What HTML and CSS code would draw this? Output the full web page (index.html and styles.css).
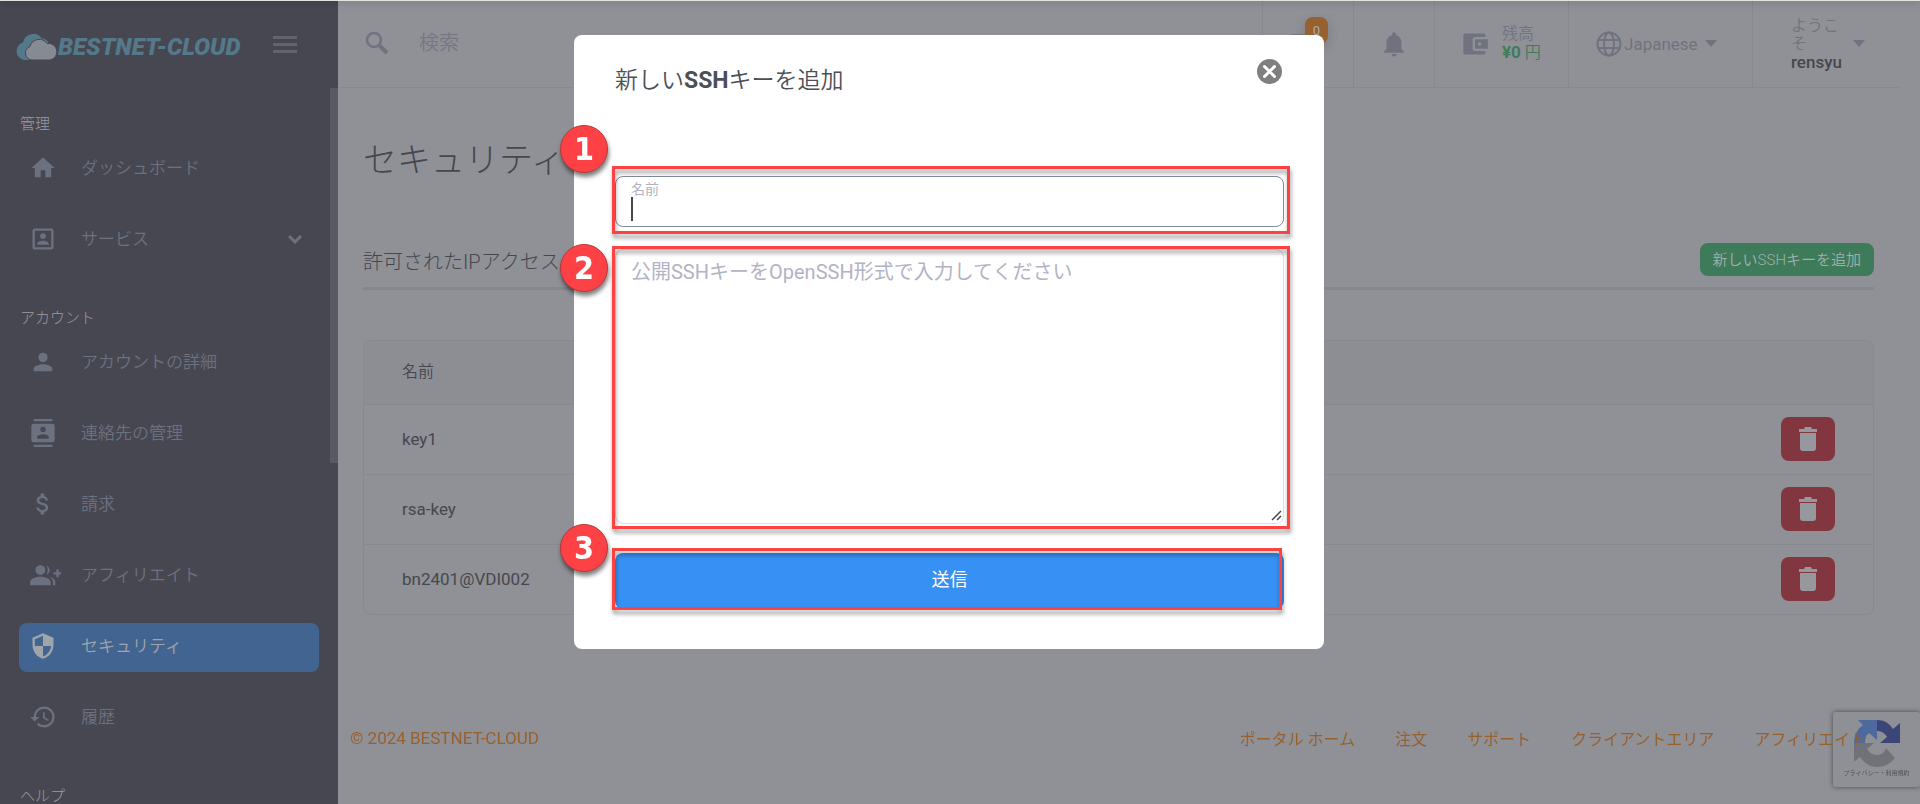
FILE: index.html
```
<!DOCTYPE html>
<html lang="ja">
<head>
  <meta charset="UTF-8" />
  <meta name="viewport" content="width=device-width, initial-scale=1.0"/>
  <title>セキュリティ - BESTNET-CLOUD</title>
  <link rel="stylesheet" href="styles.css">
</head>
<body>
  <div class="page">
    <aside class="sidebar">
      <div class="brand">
        <a href="#" class="logo">
          <svg width="42" height="26" viewBox="0 0 42 26">
            <path fill="#53798a" d="M9 26a9 9 0 0 1-1-17.500A10.500 10.500 0 0 1 27 4.500c4 0 7 3 7 7.500v14z"/>
            <path fill="#868a93" stroke="#474751" d="M17 26a7 7 0 0 1-2-13.500 9.500 9.500 0 0 1 17-3 8.200 8.200 0 0 1 3 16.500z"/>
          </svg>
          <span>BESTNET-CLOUD</span>
        </a>
        <button class="menu-toggle" aria-label="メニュー"><i></i><i></i><i></i></button>
      </div>
      <nav>
        <h6>管理</h6>
        <a href="#" class="nav-item">
          <svg class="icon" viewBox="0 0 24 24"><path d="M10 20v-6h4v6h5v-8h3L12 3 2 12h3v8z"/></svg>
          ダッシュボード
        </a>
        <a href="#" class="nav-item">
          <svg class="icon" viewBox="0 0 24 24"><path d="M19 3H5a2 2 0 0 0-2 2v14c0 1.100.900 2 2 2h14a2 2 0 0 0 2-2V5a2 2 0 0 0-2-2zm0 16H5V5h14v14zm-7-7a2.500 2.500 0 1 0 0-5 2.500 2.500 0 0 0 0 5zm5 4.500c0-2-3.300-3-5-3s-5 1-5 3v.500h10z"/></svg>
          サービス
          <svg class="chevron" width="14" height="9" viewBox="0 0 14 9"><path d="M1 1l6 6 6-6" fill="none" stroke="currentColor" stroke-width="3"/></svg>
        </a>
        <h6>アカウント</h6>
        <a href="#" class="nav-item">
          <svg class="icon" viewBox="0 0 24 24"><path d="M12 12a4 4 0 1 0 0-8 4 4 0 0 0 0 8zm0 2c-2.700 0-8 1.300-8 4v2h16v-2c0-2.700-5.300-4-8-4z"/></svg>
          アカウントの詳細
        </a>
        <a href="#" class="nav-item">
          <svg class="icon" viewBox="0 0 24 24"><path d="M20 0H4v2h16V0zM4 24h16v-2H4v2zM20 4H4a2 2 0 0 0-2 2v12c0 1.100.900 2 2 2h16a2 2 0 0 0 2-2V6a2 2 0 0 0-2-2zm-8 2.700a2.300 2.300 0 1 1 0 4.600 2.300 2.300 0 0 1 0-4.600zM17 17H7v-1.500c0-1.700 3.300-2.500 5-2.500s5 .800 5 2.500V17z"/></svg>
          連絡先の管理
        </a>
        <a href="#" class="nav-item">
          <svg class="icon" viewBox="0 0 24 24"><path d="M11.800 10.900c-2.300-.600-3-1.200-3-2.100 0-1.100 1-1.900 2.700-1.900 1.800 0 2.400.900 2.500 2.100h2.200c-.100-1.700-1.100-3.300-3.200-3.800V3h-3v2.200c-1.900.400-3.500 1.600-3.500 3.600 0 2.300 1.900 3.500 4.700 4.100 2.500.600 3 1.500 3 2.400 0 .700-.500 1.800-2.700 1.800-2.100 0-2.900-.900-3-2.100H6.300c.100 2.200 1.800 3.400 3.700 3.800V21h3v-2.200c2-.400 3.500-1.500 3.500-3.600 0-2.800-2.400-3.800-4.700-4.300z"/></svg>
          請求
        </a>
        <a href="#" class="nav-item">
          <svg class="icon wide" viewBox="0 0 28 24"><path d="M10 12a4.300 4.300 0 1 0 0-8.600 4.300 4.300 0 0 0 0 8.600zm0 1.500c-3 0-9 1.500-9 4.500v3h18v-3c0-3-6-4.500-9-4.500zM15 11.800a4.300 4.300 0 0 0 0-8.200c1.900 2.200 1.900 6 0 8.200zM18 14c2 1.200 3 2.500 3 4.500V21h2v-3c0-2.200-2.200-3.500-5-4zM26 9.500V7h-2v2.500h-2.500v2H24V14h2v-2.500h2v-2z"/></svg>
          アフィリエイト
        </a>
        <a href="#" class="nav-item active">
          <svg class="icon tall" viewBox="0 0 24 24"><path d="M12 1L3 5v6c0 5.600 3.800 10.700 9 12 5.200-1.300 9-6.400 9-12V5l-9-4zm0 11h7c-.500 4.100-3.300 7.800-7 8.900V12H5V6.300l7-3.100V12z"/></svg>
          セキュリティ
        </a>
        <a href="#" class="nav-item">
          <svg class="icon" viewBox="0 0 24 24"><path d="M13 3a9 9 0 0 0-9 9H1l3.900 3.900L9 12H6a7 7 0 1 1 2.100 4.900l-1.500 1.500A9 9 0 1 0 13 3zm-1 5v5l4.300 2.500.700-1.200-3.500-2.100V8z"/></svg>
          履歴
        </a>
        <h6>ヘルプ</h6>
      </nav>
      <div class="scroll-thumb"></div>
    </aside>

    <div class="main">
      <header class="topbar">
        <div class="search">
          <svg width="24" height="24" viewBox="0 0 24 24"><circle cx="9" cy="9" r="7" fill="none" stroke="currentColor" stroke-width="2.500"/><path d="M14 14l8 8" stroke="currentColor" stroke-width="4"/></svg>
          <input type="text" placeholder="検索" aria-label="検索">
        </div>
        <a href="#" class="cell cart" aria-label="カート">
          <svg width="26" height="26" viewBox="0 0 24 24" fill="currentColor"><path d="M2 3h18l-3 10H7v2h12v2H5V5H2zM7 18a2 2 0 1 0 0 4 2 2 0 0 0 0-4zm10 0a2 2 0 1 0 0 4 2 2 0 0 0 0-4z"/></svg>
          <span class="count">0</span>
        </a>
        <a href="#" class="cell bell" aria-label="通知">
          <svg width="30" height="30" viewBox="0 0 24 24" fill="currentColor"><path d="M12 22a2 2 0 0 0 2-2h-4c0 1.100.900 2 2 2zm6-6v-5c0-3.100-1.600-5.600-4.500-6.300V4a1.500 1.500 0 0 0-3 0v.700C7.600 5.400 6 7.900 6 11v5l-2 2v1h16v-1z"/></svg>
        </a>
        <a href="#" class="cell wallet">
          <svg width="28" height="28" viewBox="0 0 24 24" fill="currentColor"><path d="M19 3H4a2 2 0 0 0-2 2v14c0 1.100.900 2 2 2h15a2 2 0 0 0 2-2v-1h-9a2 2 0 0 1-2-2V8c0-1.100.900-2 2-2h9V5a2 2 0 0 0-2-2zm-7 5v8h11V8H12zm4 5.500a1.500 1.500 0 1 1 0-3 1.500 1.500 0 0 1 0 3z"/></svg>
          <div>残高<div class="balance"><b>¥0</b> 円</div></div>
        </a>
        <label class="cell lang">
          <svg width="26" height="26" viewBox="0 0 26 26" fill="none" stroke="currentColor" stroke-width="2"><circle cx="13" cy="13" r="11.500"/><ellipse cx="13" cy="13" rx="5" ry="11.500"/><path d="M2.500 9h21M2.500 17h21"/></svg>
          <select aria-label="言語"><option>Japanese</option></select>
          <svg class="caret" width="12" height="7" viewBox="0 0 12 7"><path d="M0 0h12L6 7z" fill="currentColor"/></svg>
        </label>
        <button class="cell user">
          <span>ようこそ<b>rensyu</b></span>
          <svg class="caret" width="12" height="7" viewBox="0 0 12 7"><path d="M0 0h12L6 7z" fill="currentColor"/></svg>
        </button>
      </header>

      <div class="content">
        <h1>セキュリティ</h1>
        <div class="tabs">
          <h2>許可されたIPアクセス</h2>
          <button class="btn-add">新しいSSHキーを追加</button>
        </div>
        <div class="table-wrap">
          <table>
            <thead>
              <tr><th>名前</th><th></th></tr>
            </thead>
            <tbody>
              <tr>
                <td>key1</td>
                <td><button class="btn-delete" aria-label="削除"><svg width="18" height="24" viewBox="0 0 18 24"><path d="M0 2h5l1-2h6l1 2h5v3H0zM1 6h16v15a3 3 0 0 1-3 3H4a3 3 0 0 1-3-3z"/></svg></button></td>
              </tr>
              <tr>
                <td>rsa-key</td>
                <td><button class="btn-delete" aria-label="削除"><svg width="18" height="24" viewBox="0 0 18 24"><path d="M0 2h5l1-2h6l1 2h5v3H0zM1 6h16v15a3 3 0 0 1-3 3H4a3 3 0 0 1-3-3z"/></svg></button></td>
              </tr>
              <tr>
                <td>bn2401@VDI002</td>
                <td><button class="btn-delete" aria-label="削除"><svg width="18" height="24" viewBox="0 0 18 24"><path d="M0 2h5l1-2h6l1 2h5v3H0zM1 6h16v15a3 3 0 0 1-3 3H4a3 3 0 0 1-3-3z"/></svg></button></td>
              </tr>
            </tbody>
          </table>
        </div>
      </div>

      <footer class="footer">
        <span>© 2024 BESTNET-CLOUD</span>
        <nav class="footer-links">
          <a href="#">ポータル ホーム</a>
          <a href="#">注文</a>
          <a href="#">サポート</a>
          <a href="#">クライアントエリア</a>
          <a href="#">アフィリエイト</a>
        </nav>
      </footer>
    </div>
  </div>

  <div class="recaptcha">
    <svg width="46" height="47" viewBox="0 0 46 47">
      <path fill="#3c4577" d="M23 0c7 0 12 3 16 9l7-6v20H26l7-6c-2-4-6-6-10-6z"/>
      <path fill="#4c6a9d" d="M23 0H4l5 5C3 9 0 16 0 23h11c0-4 1-8 4-10l8 7z"/>
      <path fill="#717277" d="M0 23v19l6-5c4 6 10 10 17 10 8 0 14-4 18-9l-9-10c-2 5-5 7-9 7-5 0-8-3-10-6l7-6z"/>
    </svg>
    <small>プライバシー・利用規約</small>
  </div>

  <div class="modal-overlay">
    <div class="modal" role="dialog" aria-labelledby="modalTitle">
      <div class="modal-header">
        <h3 id="modalTitle">新しい<b>SSH</b>キーを追加</h3>
        <button class="close" aria-label="閉じる">
          <svg width="25" height="25" viewBox="0 0 25 25"><circle cx="12.500" cy="12.500" r="12.500" fill="#7f7f7f"/><path d="M7.500 7.500l10 10M17.500 7.500l-10 10" stroke="#fff" stroke-width="3" stroke-linecap="round"/></svg>
        </button>
      </div>
      <form>
        <div class="field name-field">
          <label for="keyName">名前</label>
          <input type="text" id="keyName">
          <span class="cursor"></span>
          <span class="highlight"></span>
          <span class="step">1</span>
        </div>
        <div class="field key-field">
          <textarea aria-label="公開SSHキー" placeholder="公開SSHキーをOpenSSH形式で入力してください"></textarea>
          <svg class="grip" width="11" height="11" viewBox="0 0 11 11"><path d="M1 10l9-9M6 10l4-4" stroke="#45474f" stroke-width="1.500"/></svg>
          <span class="highlight"></span>
          <span class="step">2</span>
        </div>
        <div class="field submit-field">
          <button type="button" class="btn-submit">送信</button>
          <span class="highlight"></span>
          <span class="step">3</span>
        </div>
      </form>
    </div>
  </div>
  <div class="top-line"></div>
</body>
</html>
```
FILE: styles.css
```
* {
  box-sizing: border-box;
}
body {
  margin: 0;
  background: #909196;
  color: #45474f;
  font-family: Roboto, 'Noto Sans CJK JP', sans-serif;
  font-size: 17px;
  font-weight: 400;
  line-height: 24px;
}
a {
  color: inherit;
  text-decoration: none;
}
button, input, select, textarea {
  font: inherit;
  color: inherit;
}
button {
  border: none;
  background: none;
  padding: 0;
  cursor: pointer;
}
h1, h2, h3, h6 {
  margin: 0;
  font-weight: 300;
}
.top-line {
  position: fixed;
  z-index: 3;
  top: 0;
  left: 0;
  right: 0;
  height: 1px;
  background: #dfe6df;
  box-shadow: 0 1px 6px rgba(0, 0, 0, 0.5);
}
.page {
  display: flex;
  height: 100vh;
  overflow: hidden;
}

/* sidebar */
.sidebar {
  position: relative;
  flex: 0 0 338px;
  background: #474751;
  color: #6c7180;
  overflow: hidden;
}
.brand {
  display: flex;
  align-items: center;
  justify-content: space-between;
  height: 88px;
  padding: 0 41px 0 15px;
}
.logo {
  display: flex;
  align-items: center;
  gap: 1px;
  padding-top: 6px;
  color: #53798a;
  font-size: 24px;
  font-weight: 900;
  font-style: italic;
}
.menu-toggle {
  display: flex;
  flex-direction: column;
  gap: 4px;
  width: 24px;
}
.menu-toggle i {
  height: 3px;
  background: #62636f;
}
.sidebar nav {
  padding: 28px 19px 0;
}
.sidebar h6 {
  margin: 45px 0 13px 1px;
  color: #9a9ba0;
  font-size: 15px;
  line-height: 16px;
}
.sidebar h6:first-child {
  margin-top: 0;
}
.nav-item {
  display: flex;
  align-items: center;
  height: 49px;
  margin-bottom: 22px;
  padding: 0 17px 3px 10px;
  border-radius: 8px;
  font-weight: 350;
}
.nav-item:has(+ h6) {
  margin-bottom: 0;
}
.nav-item.active {
  background: #416590;
  color: #a0a4ab;
}
.icon {
  width: 28px;
  height: 28px;
  margin-right: 24px;
  fill: currentColor;
}
.icon.wide {
  width: 32px;
  margin-right: 20px;
}
.icon.tall {
  height: 32px;
}
.chevron {
  margin-left: auto;
}
.scroll-thumb {
  position: absolute;
  top: 88px;
  right: 0;
  width: 8px;
  height: 375px;
  background: #575963;
}

/* top bar */
.main {
  flex: 1;
  min-width: 0;
  padding-right: 21px;
}
.topbar {
  display: flex;
  height: 88px;
  border-bottom: 1px solid #88898e;
  color: #70737f;
}
.search {
  flex: 1;
  display: flex;
  align-items: center;
  gap: 28px;
  padding: 0 0 2px 27px;
}
.search input {
  flex: 1;
  min-width: 0;
  border: none;
  background: none;
  font-size: 20px;
  font-weight: 350;
}
::placeholder {
  color: #757783;
  opacity: 1;
}
.cell {
  position: relative;
  display: flex;
  align-items: center;
  border-left: 1px solid #88898e;
  font-size: 17px;
}
.cart {
  width: 91px;
  padding-left: 26px;
}
.count {
  position: absolute;
  top: 17px;
  left: 42px;
  width: 23px;
  height: 27px;
  border-radius: 8px;
  background: #97602f;
  color: #b0aba8;
  font-size: 13px;
  line-height: 27px;
  text-align: center;
  box-shadow: 0 4px 12px rgba(0, 0, 0, 0.15);
}
.bell {
  width: 81px;
  justify-content: center;
}
.wallet {
  width: 134px;
  gap: 13px;
  padding-left: 26px;
  font-size: 16px;
  font-weight: 350;
  line-height: 18px;
}
.balance {
  color: #3e7b5b;
}
.balance b {
  font-size: 17px;
  font-weight: 700;
}
.lang {
  width: 184px;
  padding-left: 27px;
}
.lang select {
  width: 83px;
  padding: 0 0 0 2px;
  border: none;
  background: none;
  appearance: none;
}
.user {
  width: 147px;
  gap: 12px;
  padding-left: 38px;
  font-size: 16px;
  font-weight: 350;
  line-height: 18px;
  text-align: left;
}
.user span {
  width: 50px;
}
.user b {
  display: block;
  color: #45474f;
  font-size: 17px;
  font-weight: 500;
}

/* content */
.content {
  padding: 48px 25px 0;
}
h1 {
  font-size: 34px;
  line-height: 48px;
}
.tabs {
  display: flex;
  justify-content: space-between;
  align-items: flex-end;
  margin-top: 59px;
  padding-bottom: 11px;
  border-bottom: 3px solid #86878c;
}
h2 {
  font-size: 20px;
  line-height: 28px;
}
.btn-add {
  height: 33px;
  padding: 0 13px;
  border-radius: 8px;
  background: #3e7b5b;
  color: #a3b0ab;
  font-size: 15px;
  font-weight: 350;
}
.table-wrap {
  margin-top: 50px;
  border: 1px solid #88898e;
  border-radius: 8px;
  overflow: hidden;
}
table {
  width: 100%;
  border-collapse: collapse;
}
th, td {
  padding: 13px 38px;
  text-align: left;
}
th {
  height: 63px;
  background: #8d8e93;
  font-size: 16px;
  font-weight: 350;
}
tbody td {
  height: 70px;
  padding: 12px 38px 13px;
  border-top: 1px solid #88898e;
}
td:last-child {
  text-align: right;
}
.btn-delete {
  display: inline-flex;
  align-items: center;
  justify-content: center;
  width: 54px;
  height: 44px;
  border-radius: 8px;
  background: #813640;
  vertical-align: top;
}
.btn-delete svg {
  fill: #97989d;
}
.footer {
  position: relative;
  z-index: 1;
  display: flex;
  justify-content: space-between;
  margin-top: 111px;
  padding: 0 33px 0 12px;
  color: #97602f;
}
.footer-links {
  display: flex;
  gap: 40px;
  padding-top: 2px;
  font-size: 16px;
}
.recaptcha {
  position: fixed;
  right: 0;
  bottom: 17px;
  display: flex;
  flex-direction: column;
  align-items: center;
  width: 87px;
  height: 75px;
  padding-top: 8px;
  border-radius: 3px;
  background: #8f9095;
  box-shadow: 0 0 5px rgba(0, 0, 0, 0.5);
}
.recaptcha small {
  color: #505157;
  font-size: 6px;
  line-height: 12px;
  white-space: nowrap;
}

/* modal */
.modal-overlay {
  position: fixed;
  z-index: 2;
  inset: 0;
  padding: 35px 22px 0 0;
}
.modal {
  width: 750px;
  margin: 0 auto;
  padding: 23px 40px 40px 41px;
  border-radius: 8px;
  background: #fff;
}
.modal-header {
  display: flex;
  justify-content: space-between;
  align-items: flex-start;
  margin-bottom: 75px;
}
.modal-header h3 {
  padding-top: 3px;
  color: #4c4f55;
  font-size: 23px;
  font-weight: 350;
  line-height: 40px;
}
.modal-header b {
  font-weight: 700;
}
.close {
  display: flex;
  padding: 1px 2px 0 0;
}
.field {
  position: relative;
}
.name-field label {
  position: absolute;
  top: 4px;
  left: 16px;
  color: #b2b3c4;
  font-size: 14px;
  line-height: 18px;
}
.name-field input {
  display: block;
  width: 100%;
  height: 51px;
  padding: 20px 16px 4px;
  border: 1px solid #7d8b9b;
  border-radius: 8px;
  outline: none;
}
.cursor {
  position: absolute;
  top: 21px;
  left: 16px;
  width: 2px;
  height: 24px;
  background: #45474f;
}
.key-field {
  margin: 22px 0 29px;
}
.key-field textarea {
  display: block;
  width: 100%;
  height: 275px;
  padding: 8px 15px;
  border: 1px solid #dcdee3;
  border-radius: 8px;
  font-size: 20px;
  line-height: 28px;
  outline: none;
  resize: none;
}
.key-field ::placeholder {
  color: #b2b3c4;
}
.grip {
  position: absolute;
  right: 2px;
  bottom: 3px;
}
.btn-submit {
  display: block;
  width: 100%;
  height: 56px;
  padding-bottom: 2px;
  border-radius: 8px;
  background: #3790f3;
  color: #fff;
  font-size: 18px;
}

/* numbered steps drawn over the form */
.highlight {
  position: absolute;
  inset: -10px -6px -7px -3px;
  border: 3px solid #fe4143;
  filter: drop-shadow(1px 4px 2px rgba(0, 0, 0, 0.4));
  pointer-events: none;
}
.key-field .highlight {
  inset: -3px -6px -5px -3px;
}
.submit-field .highlight {
  inset: -5px 2px -1px -3px;
}
.step {
  position: absolute;
  top: -51px;
  left: -55px;
  width: 48px;
  height: 48px;
  border: 1px solid #b7383b;
  border-radius: 50%;
  background: #fe4145;
  color: #fff;
  font-family: 'DejaVu Sans Condensed', 'DejaVu Sans', sans-serif;
  font-size: 32px;
  font-weight: 700;
  line-height: 46px;
  text-align: center;
  box-shadow: 1px 4px 4px rgba(0, 0, 0, 0.5);
}
.key-field .step {
  top: -5px;
}
.submit-field .step {
  top: -29px;
}
```
